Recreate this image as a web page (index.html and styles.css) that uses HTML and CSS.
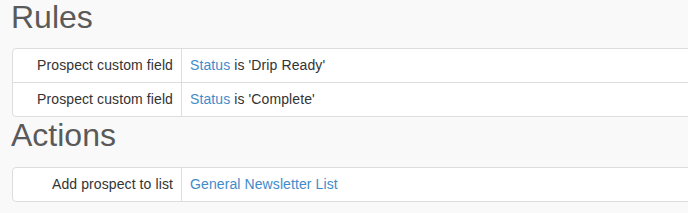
FILE: index.html
```html
<!DOCTYPE html>
<html>
<head>
<meta charset="utf-8">
<link rel="stylesheet" href="styles.css">
</head>
<body>
<div class="page">
  <h2 class="heading heading-first">Rules</h2>
  <table class="detail-table">
    <tr>
      <td class="label">Prospect custom field</td>
      <td class="value"><a href="#" class="link">Status</a> is 'Drip Ready'</td>
    </tr>
    <tr>
      <td class="label">Prospect custom field</td>
      <td class="value"><a href="#" class="link">Status</a> is 'Complete'</td>
    </tr>
  </table>
  <h2 class="heading">Actions</h2>
  <table class="detail-table">
    <tr>
      <td class="label">Add prospect to list</td>
      <td class="value"><a href="#" class="link">General Newsletter List</a></td>
    </tr>
  </table>
</div>
</body>
</html>
```
FILE: styles.css
```css
html, body {
  margin: 0;
  padding: 0;
  background: #f9f9f9;
  overflow: hidden;
}
body {
  font-family: "Liberation Sans", Arial, Helvetica, sans-serif;
  font-size: 14px;
  color: #333;
}
.page {
  padding: 0 0 0 12px;
}
.heading {
  font-size: 32px;
  font-weight: normal;
  line-height: 35px;
  color: #5a5a5a;
  margin: 1px 0 14px -1px;
}
.heading-first {
  margin-top: 0;
  margin-bottom: 13px;
}
.detail-table {
  width: calc(100% + 20px);
  border-collapse: separate;
  border-spacing: 0;
  background: #fff;
  border: 1px solid #ddd;
  border-radius: 4px;
  margin: 0;
}
.detail-table td {
  padding: 6px 8px;
  line-height: 21px;
  letter-spacing: 0.1px;
  border-top: 1px solid #ddd;
  vertical-align: middle;
}
.detail-table tr:first-child td {
  border-top: none;
}
.detail-table .label {
  width: 152px;
  text-align: right;
  border-right: 1px solid #ddd;
  white-space: nowrap;
}
.detail-table .value {
  text-align: left;
}
.link {
  color: #428bca;
  text-decoration: none;
}
```
